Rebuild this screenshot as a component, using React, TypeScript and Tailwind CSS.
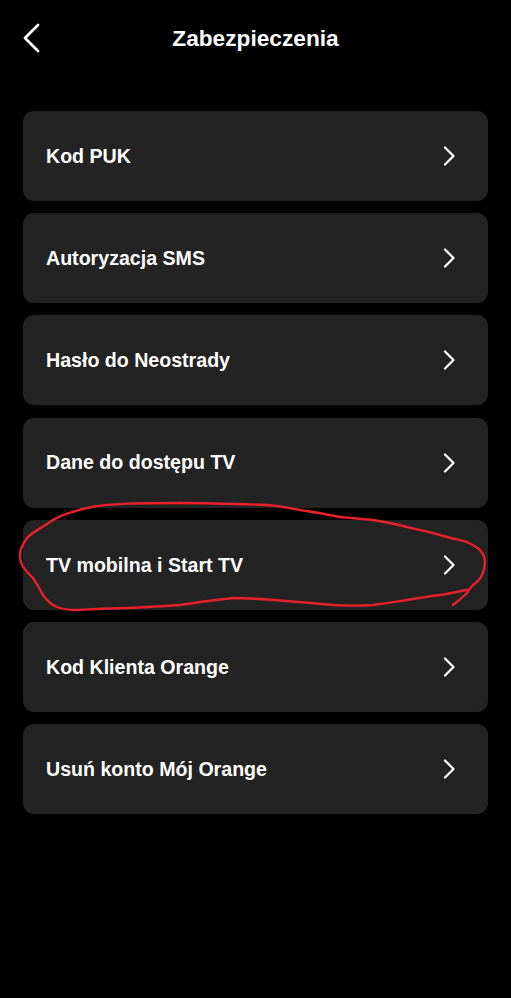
import React from "react";

const items = [
  "Kod PUK",
  "Autoryzacja SMS",
  "Hasło do Neostrady",
  "Dane do dostępu TV",
  "TV mobilna i Start TV",
  "Kod Klienta Orange",
  "Usuń konto Mój Orange",
];

function ChevronRight() {
  return (
    <svg width="14" height="20" viewBox="0 0 14 20" fill="none">
      <path d="M2 1.5 L10.5 10 L2 18.5" stroke="white" strokeWidth="2.2" strokeLinecap="round" strokeLinejoin="round" />
    </svg>
  );
}

export default function App() {
  return (
    <div
      className="relative w-[511px] h-[998px] bg-black text-white"
      style={{ fontFamily: '"Liberation Sans", Arial, sans-serif' }}
    >
      <div className="relative h-[76px] flex items-center justify-center">
        <div className="absolute left-[22px] top-[23px]">
          <svg width="20" height="30" viewBox="0 0 20 30" fill="none">
            <path d="M16 2 L3 15 L16 28" stroke="white" strokeWidth="2.8" strokeLinecap="round" strokeLinejoin="round" />
          </svg>
        </div>
        <h1 className="text-[22.7px] font-bold">Zabezpieczenia</h1>
      </div>
      <div className="pt-[35px] px-[23px] flex flex-col gap-[12.2px]">
        {items.map((t) => (
          <div
            key={t}
            className="h-[90px] rounded-[11px] bg-[#232323] flex items-center justify-between pl-[23px] pr-[31px]"
          >
            <span className="text-[19.6px] font-bold pt-[1px]">{t}</span>
            <ChevronRight />
          </div>
        ))}
      </div>
      <svg
        className="absolute left-0 top-0 pointer-events-none"
        width="511"
        height="998"
        viewBox="0 0 511 998"
        fill="none"
      >
        <path
          d="M180 503 C140 503 110 503 87 508 C70 512 58 516 50 522 C38 530 30 534 27 538 C22 545 20 550 20 555 C20 560 21 563 22 565 C26 572 30 575 33 578 C38 585 40 590 43 595 C48 602 52 605 57 607 C64 610 70 610 77 610 C95 609 110 608 127 608 C150 607 165 606 180 605 C200 602 215 600 233 598 C260 598 300 602 333 605 C350 606 360 606 373 605 C390 603 400 601 407 600 C420 598 430 596 440 595 C448 594 460 591 467 590"
          stroke="#e8202a"
          strokeWidth="2.4"
          strokeLinecap="round"
          strokeLinejoin="round"
        />
        <path
          d="M180 503 C210 503 240 504 267 505 C280 506 290 508 300 510 C315 512 325 514 340 517 C350 518 362 519 373 520 C385 522 397 524 407 527 C420 530 430 532 440 535 C450 538 460 540 467 542 C473 545 478 548 480 550 C484 555 485 558 485 562 C485 567 484 571 482 575 C480 580 476 583 473 585 C470 588 468 591 467 593 C463 597 458 601 453 605"
          stroke="#e8202a"
          strokeWidth="2.4"
          strokeLinecap="round"
          strokeLinejoin="round"
        />
      </svg>
    </div>
  );
}
